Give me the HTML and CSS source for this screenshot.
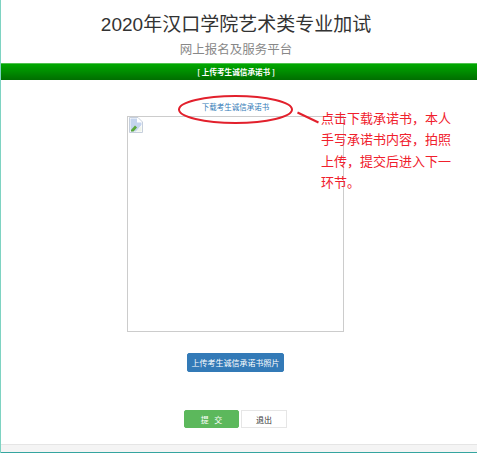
FILE: index.html
```html
<!DOCTYPE html>
<html lang="zh">
<head>
<meta charset="utf-8">
<title>上传考生诚信承诺书</title>
<link rel="stylesheet" href="styles.css">
</head>
<body>
<div class="page">
  <header class="head">
    <h1 class="title">2020年汉口学院艺术类专业加试</h1>
    <p class="subtitle">网上报名及服务平台</p>
  </header>
  <div class="bar">[ 上传考生诚信承诺书 ]</div>
  <main class="main">
    <a class="link" href="#">下载考生诚信承诺书</a>
    <div class="photo">
      <svg class="broken" viewBox="0 0 16 16" width="16" height="16">
        <path d="M1.5 .5H10L14.5 5V15.5H1.5Z" fill="#fff" stroke="#c6cfdc"/>
        <path d="M2.5 1.5H9V5.5H13.5V8L8 14.5H2.5Z" fill="#c4d4ee"/>
        <path d="M3 13L7 8.5L9 10.5L5.5 14.5H3Z" fill="#5aa83c"/>
        <path d="M8 14.5L13.5 9V14.5Z" fill="#eef3ea"/>
      </svg>
    </div>
    <button class="btn upload" type="button">上传考生诚信承诺书照片</button>
    <div class="actions">
      <button class="btn submit" type="button">提 &nbsp; 交</button>
      <button class="btn quit" type="button">退出</button>
    </div>
  </main>
  <footer class="foot"></footer>
  <svg class="marks" viewBox="0 0 477 453" width="477" height="453">
    <ellipse cx="235.5" cy="109.5" rx="56.5" ry="13.5" fill="none" stroke="#e2202c" stroke-width="2"/>
    <line x1="297.5" y1="112.5" x2="318.5" y2="122.5" stroke="#e2202c" stroke-width="2"/>
  </svg>
  <p class="note">点击下载承诺书，本人手写承诺书内容，拍照上传，提交后进入下一环节。</p>
</div>
</body>
</html>
```
FILE: styles.css
```css
* { box-sizing: border-box; }
html, body { margin: 0; height: 453px; overflow: hidden; background: #fff; }
body { font-family: "Noto Sans CJK SC", "Liberation Sans", sans-serif; }
.page {
  position: relative;
  display: flex;
  flex-direction: column;
  height: 453px;
  border-left: 1px solid #7ed3c2;
}
.head { height: 67px; padding: 12px 6px 0 0; text-align: center; }
.title {
  margin: 0;
  font-family: "Liberation Sans", "Noto Sans CJK SC", sans-serif;
  font-size: 19px;
  line-height: 26px;
  font-weight: 400;
  color: #333;
}
.subtitle {
  margin: 2px 0 0;
  font-size: 12.5px;
  line-height: 17px;
  color: #888;
}
.bar {
  height: 17px;
  border-top: 1px solid #4fc24f;
  background: linear-gradient(#00a800, #006e00);
  color: #fff;
  font-size: 7.6px;
  font-weight: 700;
  line-height: 16px;
  text-align: center;
  padding-right: 6px;
}
.main {
  flex: 1;
  display: flex;
  flex-direction: column;
  align-items: center;
  padding: 21px 7px 0 0;
}
.link {
  height: 11px;
  font-size: 7.5px;
  line-height: 11px;
  color: #337ab7;
  text-decoration: none;
}
.photo {
  width: 217px;
  height: 216px;
  margin-top: 4px;
  border: 1px solid #ccc;
  background: #fff;
}
.broken { display: block; }
.btn {
  display: block;
  margin: 0;
  padding: 0;
  border: 1px solid transparent;
  border-radius: 2px;
  font-family: inherit;
  font-size: 8px;
}
.upload {
  width: 97px;
  height: 19px;
  margin-top: 21px;
  background: #337ab7;
  border-color: #337ab7;
  color: #fff;
}
.actions { display: flex; gap: 2px; margin-top: 38px; }
.submit { width: 55px; height: 18px; background: #5cb85c; border-color: #5cb85c; color: #fff; }
.quit { width: 46px; height: 18px; background: #fff; border-color: #e6e6e6; border-radius: 0; color: #333; }
.foot {
  height: 9px;
  margin-top: 16px;
  border-top: 1px solid #e5e5e5;
  border-bottom: 1px solid #35a5a0;
  background: #f4f4f4;
}
.marks { position: absolute; left: -1px; top: 0; pointer-events: none; }
.note {
  position: absolute;
  left: 320px;
  top: 107px;
  width: 132px;
  margin: 0;
  font-size: 13px;
  line-height: 21.3px;
  color: #f0202c;
}
```
